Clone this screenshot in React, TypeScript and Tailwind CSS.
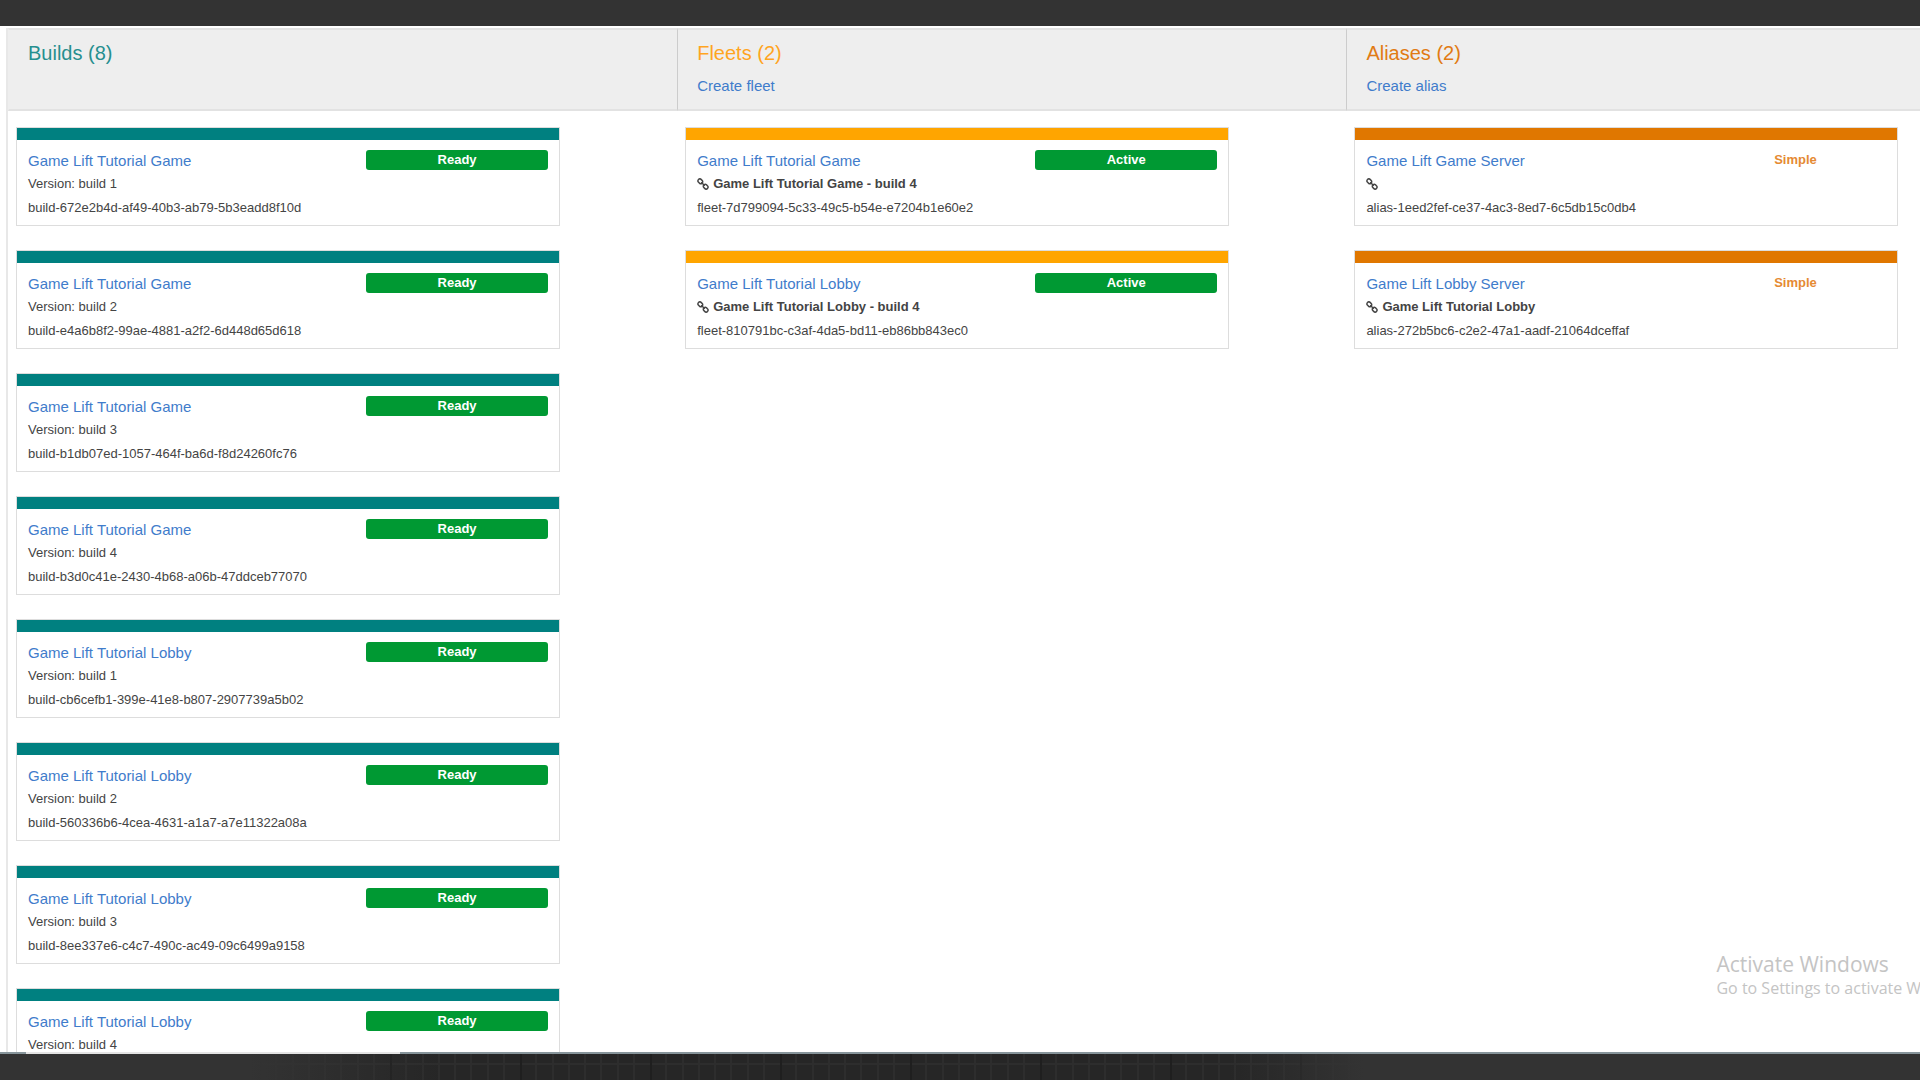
import React from 'react';

type Accent = 'teal' | 'amber' | 'orange';

interface Resource {
  id?: string;
  name: string;
  status: string;
  version?: string;
  // undefined: no link row, empty string: link row with only the icon
  linkedTo?: string;
}

interface Column {
  title: string;
  accent: Accent;
  action?: string;
  items: Resource[];
}

const columns: Column[] = [
  {
    title: 'Builds',
    accent: 'teal',
    items: [
      { id: 'build-672e2b4d-af49-40b3-ab79-5b3eadd8f10d', name: 'Game Lift Tutorial Game', status: 'Ready', version: 'build 1' },
      { id: 'build-e4a6b8f2-99ae-4881-a2f2-6d448d65d618', name: 'Game Lift Tutorial Game', status: 'Ready', version: 'build 2' },
      { id: 'build-b1db07ed-1057-464f-ba6d-f8d24260fc76', name: 'Game Lift Tutorial Game', status: 'Ready', version: 'build 3' },
      { id: 'build-b3d0c41e-2430-4b68-a06b-47ddceb77070', name: 'Game Lift Tutorial Game', status: 'Ready', version: 'build 4' },
      { id: 'build-cb6cefb1-399e-41e8-b807-2907739a5b02', name: 'Game Lift Tutorial Lobby', status: 'Ready', version: 'build 1' },
      { id: 'build-560336b6-4cea-4631-a1a7-a7e11322a08a', name: 'Game Lift Tutorial Lobby', status: 'Ready', version: 'build 2' },
      { id: 'build-8ee337e6-c4c7-490c-ac49-09c6499a9158', name: 'Game Lift Tutorial Lobby', status: 'Ready', version: 'build 3' },
      { name: 'Game Lift Tutorial Lobby', status: 'Ready', version: 'build 4' },
    ],
  },
  {
    title: 'Fleets',
    accent: 'amber',
    action: 'Create fleet',
    items: [
      { id: 'fleet-7d799094-5c33-49c5-b54e-e7204b1e60e2', name: 'Game Lift Tutorial Game', status: 'Active', linkedTo: 'Game Lift Tutorial Game - build 4' },
      { id: 'fleet-810791bc-c3af-4da5-bd11-eb86bb843ec0', name: 'Game Lift Tutorial Lobby', status: 'Active', linkedTo: 'Game Lift Tutorial Lobby - build 4' },
    ],
  },
  {
    title: 'Aliases',
    accent: 'orange',
    action: 'Create alias',
    items: [
      { id: 'alias-1eed2fef-ce37-4ac3-8ed7-6c5db15c0db4', name: 'Game Lift Game Server', status: 'Simple', linkedTo: '' },
      { id: 'alias-272b5bc6-c2e2-47a1-aadf-21064dceffaf', name: 'Game Lift Lobby Server', status: 'Simple', linkedTo: 'Game Lift Tutorial Lobby' },
    ],
  },
];

const titleColors: Record<Accent, string> = {
  teal: 'text-[#268f8f]',
  amber: 'text-[#ffa51f]',
  orange: 'text-[#e17b14]',
};

const barColors: Record<Accent, string> = {
  teal: 'bg-[#008080]',
  amber: 'bg-[#ffa500]',
  orange: 'bg-[#e07700]',
};

const statusStyles: Record<string, string> = {
  Ready: 'bg-[#009933] text-white',
  Active: 'bg-[#009933] text-white',
  Simple: 'text-[#e58a33]',
};

const LinkIcon = () => (
  <svg className="w-3 h-3 shrink-0" viewBox="0 0 12 12" fill="none" stroke="currentColor" strokeWidth="1.5" aria-hidden="true">
    <rect x="-2.5" y="-1.9" width="5" height="3.8" rx="1.7" transform="translate(3.3 3.3) rotate(45)" />
    <rect x="-2.5" y="-1.9" width="5" height="3.8" rx="1.7" transform="translate(8.7 8.7) rotate(45)" />
    <path d="M4.2 4.2 L7.8 7.8" />
  </svg>
);

const ResourceCard: React.FC<{ item: Resource; accent: Accent }> = ({ item, accent }) => (
  <li className="border border-[#dddddd] bg-white">
    <div className={`h-3 ${barColors[accent]}`} />
    <div className="flex items-start px-[11px] pt-[10px] pb-[5px]">
      <div className="flex-1 min-w-0">
        <a href="#" className="block text-[15px] leading-[22px] text-[#3f7ccb]">{item.name}</a>
        {item.version && <div className="text-[13px] leading-6">Version: {item.version}</div>}
        {item.linkedTo !== undefined && (
          <div className="flex items-center gap-1 h-6 text-[13px] leading-6 font-bold">
            <LinkIcon />
            <span>{item.linkedTo}</span>
          </div>
        )}
        {item.id && <div className="text-[13px] leading-6">{item.id}</div>}
      </div>
      <span className={`w-[35%] rounded-[3px] text-center text-[13px] leading-5 font-bold ${statusStyles[item.status]}`}>
        {item.status}
      </span>
    </div>
  </li>
);

const ResourceColumn: React.FC<{ column: Column; first: boolean }> = ({ column, first }) => (
  <section>
    <header
      className={`h-[83px] pl-[19px] pt-[11px] border-t-2 border-b-2 border-[#e2e2e2] bg-[#eeeeee] border-l ${
        first ? 'border-l-[#eeeeee]' : 'border-l-[#cccccc]'
      }`}
    >
      <h2 className={`text-[20px] leading-6 ${titleColors[column.accent]}`}>
        {column.title} ({column.items.length})
      </h2>
      {column.action && (
        <a href="#" className="inline-block mt-[9px] text-[15px] leading-6 text-[#3f7ccb]">{column.action}</a>
      )}
    </header>
    <ul className="flex flex-col gap-6 w-[82.5%] pl-2 pt-4">
      {column.items.map((item, i) => (
        <ResourceCard key={i} item={item} accent={column.accent} />
      ))}
    </ul>
  </section>
);

// Textured strip under the window
const GridStrip = () => (
  <svg className="block w-full h-full" aria-hidden="true">
    <defs>
      <pattern id="cells" width="130" height="32" patternUnits="userSpaceOnUse">
        <path d="M16 0V32M33 0V32M49 0V32M65 0V32M81 0V32M98 0V32M114 0V32M0 10H130" stroke="#2d2d2d" strokeWidth="2" />
        <path d="M1 0V32" stroke="#1f1f1f" strokeWidth="2" />
      </pattern>
      <linearGradient id="fade">
        <stop offset="0.13" stopColor="#333333" />
        <stop offset="0.23" stopColor="#333333" stopOpacity="0" />
        <stop offset="0.64" stopColor="#333333" stopOpacity="0" />
        <stop offset="0.71" stopColor="#333333" />
      </linearGradient>
    </defs>
    <rect width="100%" height="100%" fill="#262626" />
    <rect width="100%" height="100%" fill="url(#cells)" />
    <rect width="100%" height="100%" fill="url(#fade)" />
  </svg>
);

const App: React.FC = () => (
  <div className="flex flex-col h-screen overflow-hidden bg-[#333333] font-['Liberation_Sans',Arial,sans-serif] text-[#444444]">
    <div className="h-[26px] shrink-0" />
    <main className="relative flex-1 min-h-0 overflow-hidden bg-white pt-[2px] pl-[6px]">
      <div className="grid grid-cols-[35%_35%_35%] h-full border-l-2 border-[#e8e8e8]">
        {columns.map((column, i) => (
          <ResourceColumn key={column.title} column={column} first={i === 0} />
        ))}
      </div>
      <div className="absolute left-[89.4%] bottom-[52px] whitespace-nowrap font-['Open_Sans',sans-serif] text-[#c4c4c4]">
        <div className="text-[21px] leading-6">Activate Windows</div>
        <div className="text-[16px] leading-6">Go to Settings to activate Windows.</div>
      </div>
    </main>
    <div className="flex h-[2px] shrink-0 bg-[#87959b]">
      <div className="w-[26px]" />
      <div className="w-[19.5%] bg-[#e4e4e4]" />
    </div>
    <div className="h-[26px] shrink-0">
      <GridStrip />
    </div>
  </div>
);

export default App;
